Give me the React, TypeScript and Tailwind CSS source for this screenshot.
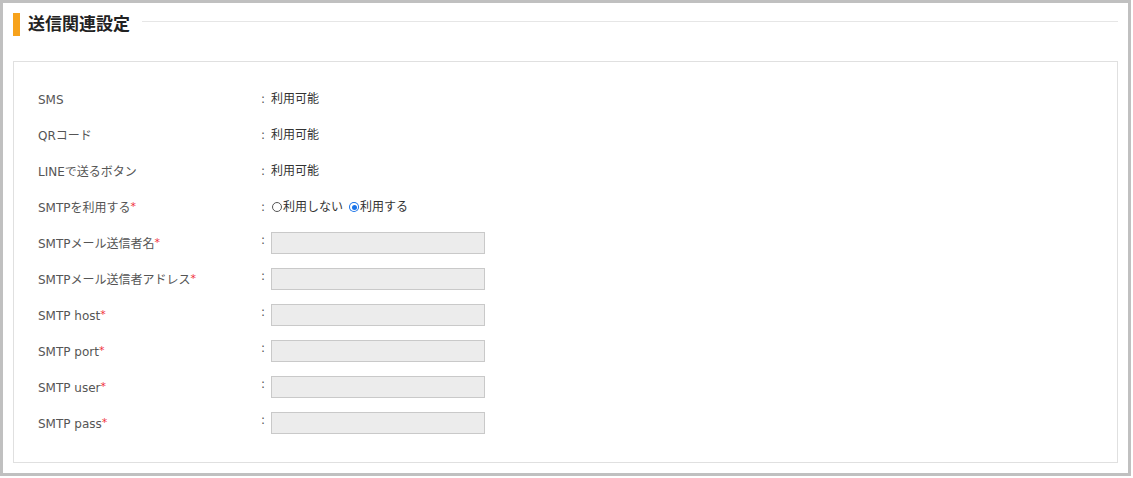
import React from "react";

type Row =
    | { label: string; required?: boolean; kind: "text"; value: string }
    | { label: string; required?: boolean; kind: "radio" }
    | { label: string; required?: boolean; kind: "input" };

const rows: Row[] = [
    { label: "SMS", kind: "text", value: "利用可能" },
    { label: "QRコード", kind: "text", value: "利用可能" },
    { label: "LINEで送るボタン", kind: "text", value: "利用可能" },
    { label: "SMTPを利用する", required: true, kind: "radio" },
    { label: "SMTPメール送信者名", required: true, kind: "input" },
    { label: "SMTPメール送信者アドレス", required: true, kind: "input" },
    { label: "SMTP host", required: true, kind: "input" },
    { label: "SMTP port", required: true, kind: "input" },
    { label: "SMTP user", required: true, kind: "input" },
    { label: "SMTP pass", required: true, kind: "input" },
];

function Radio({ checked }: { checked?: boolean }) {
    if (checked) {
        return (
            <span className="inline-flex items-center justify-center w-[10px] h-[10px] rounded-full bg-[#1a73e8]">
                <span className="inline-flex items-center justify-center w-[8px] h-[8px] rounded-full bg-white">
                    <span className="w-[5px] h-[5px] rounded-full bg-[#1a73e8]" />
                </span>
            </span>
        );
    }
    return <span className="inline-block w-[10px] h-[10px] rounded-full border border-[#555] bg-white" />;
}

export default function App() {
    return (
        <div
            className="w-[1131px] h-[476px] border-[3px] border-[#c0c0c0] bg-white px-[10px] pt-[10px] text-[#444]"
            style={{ fontFamily: '"DejaVu Sans", "Noto Sans CJK JP", sans-serif' }}
        >
            <div className="flex items-start">
                <div className="w-[7px] h-[23px] bg-[#f7a21b]" />
                <h2 className="ml-[8px] text-[17px] leading-[23px] font-bold text-[#222]">送信関連設定</h2>
                <div className="flex-1 ml-[12px] mt-[8px] h-px bg-[#e6e6e6]" />
            </div>

            <div className="mt-[25px] border border-[#e0e0e0] pl-[24px] pt-[19px] pb-[21px]">
                {rows.map((row, i) => (
                    <div key={i} className="flex items-center h-[36px] text-[12px]">
                        <div className="w-[223px] shrink-0 pt-[2px] text-[#555]">
                            {row.label}
                            {row.required && <span className="text-[#f0303a] text-[11px] align-top">*</span>}
                        </div>
                        {row.kind === "input" ? (
                            <>
                                <span className="w-[10px] self-start mt-[6px] text-[#555]">:</span>
                                <input
                                    type="text"
                                    className="w-[214px] h-[22px] bg-[#ececec] border border-[#c9c9c9] outline-none"
                                />
                            </>
                        ) : (
                            <>
                                <span className="w-[10px] text-[#555]">:</span>
                                {row.kind === "text" ? (
                                    <span className="text-[#333]">{row.value}</span>
                                ) : (
                                    <span className="flex items-center text-[#333]">
                                        <span className="ml-[1px] mr-[1px] flex"><Radio /></span>
                                        <span>利用しない</span>
                                        <span className="ml-[6px] mr-[1px] flex"><Radio checked /></span>
                                        <span>利用する</span>
                                    </span>
                                )}
                            </>
                        )}
                    </div>
                ))}
            </div>
        </div>
    );
}
